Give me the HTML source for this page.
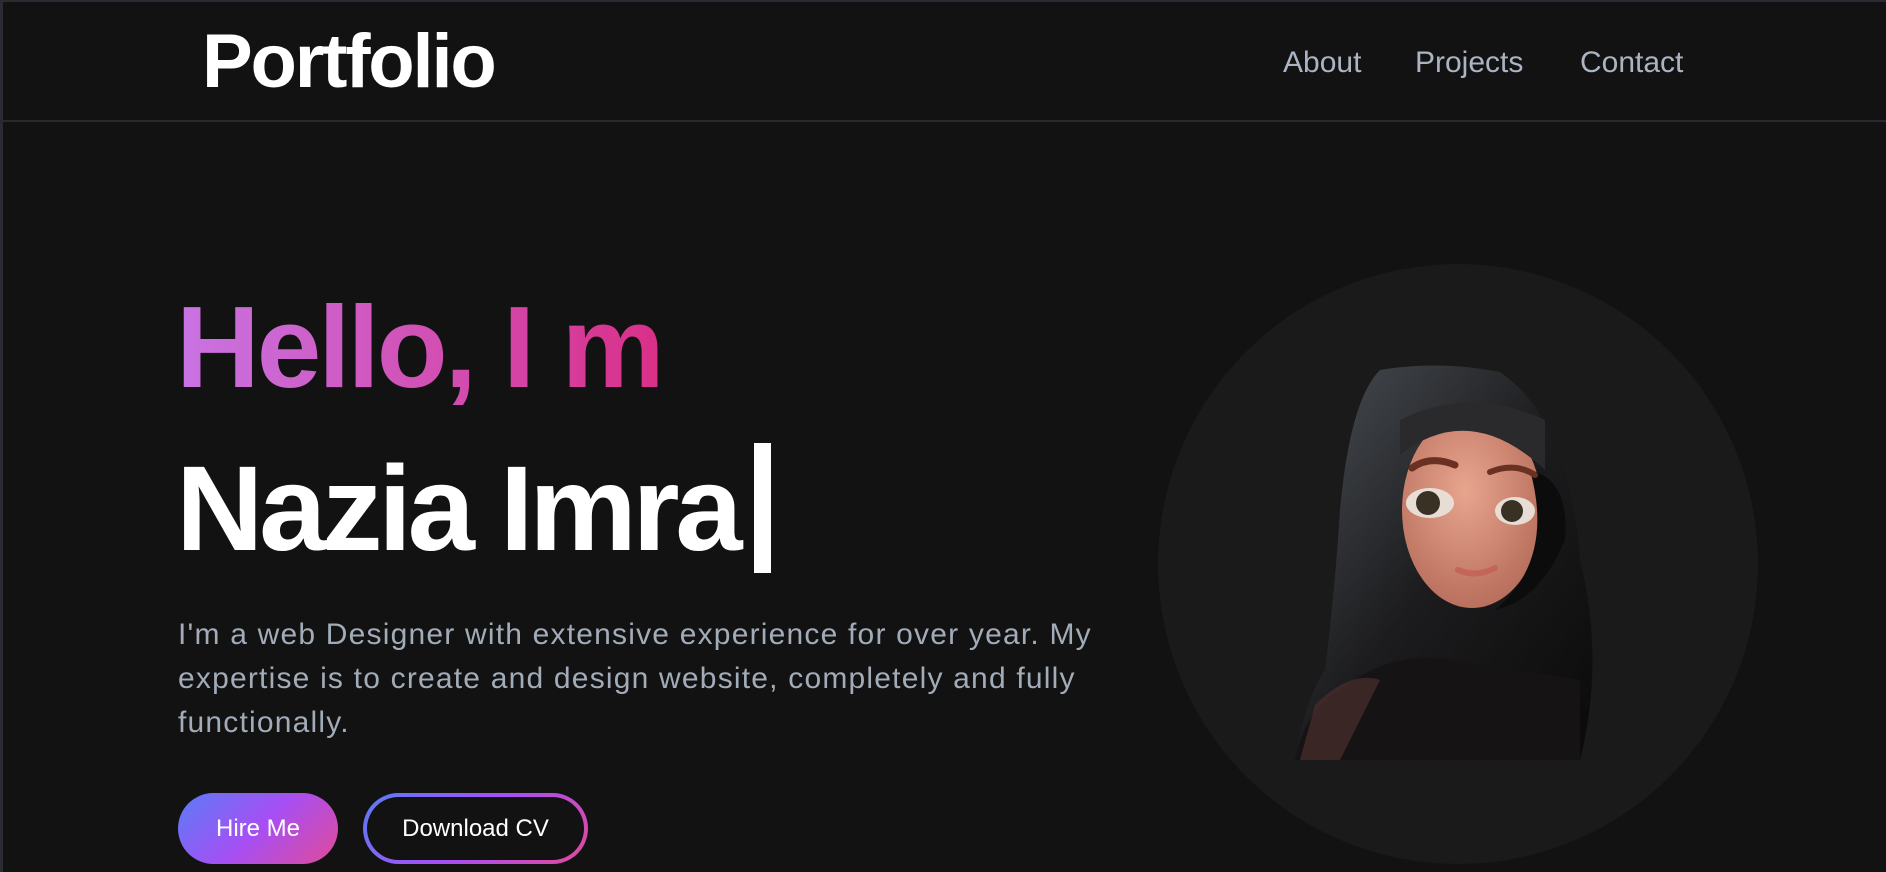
<!DOCTYPE html>
<html><head><meta charset="utf-8"><style>
*{margin:0;padding:0;box-sizing:border-box}
html,body{width:1886px;height:872px;overflow:hidden;background:#121212;font-family:"Liberation Sans",sans-serif}
.top{position:absolute;left:0;top:0;width:1886px;height:2px;background:#2b2b33}
.lft{position:absolute;left:0;top:0;width:3px;height:872px;background:#2b2b33}
.hdr{position:absolute;left:0;top:120px;width:1886px;height:2px;background:#2a2a2e}
.logo{position:absolute;left:202px;top:18px;font-size:76px;font-weight:bold;color:#fff;letter-spacing:-2.2px}
.nav{position:absolute;top:46px;font-size:30px;color:#aab4c2}
.h1{position:absolute;left:176px;top:282px;font-size:116px;font-weight:bold;letter-spacing:-3px;background:linear-gradient(90deg,#c974e4,#d92f88);-webkit-background-clip:text;color:transparent;line-height:130px}
.h2{position:absolute;left:176px;top:443px;font-size:121px;font-weight:bold;color:#fff;letter-spacing:-4.3px;line-height:130px}
.cur{position:absolute;left:754px;top:443px;width:17px;height:130px;background:#fff}
.p{position:absolute;left:178px;top:613px;width:960px;font-size:30px;line-height:44px;color:#a2acb9;letter-spacing:1.2px}
.b1{position:absolute;left:178px;top:793px;width:160px;height:71px;border-radius:36px;background:linear-gradient(135deg,#5a7cf6,#a64ff4 50%,#e14a98);color:#fff;font-size:24px;text-align:center;line-height:71px}
.b2{position:absolute;left:363px;top:793px;width:225px;height:71px;border-radius:36px;background:linear-gradient(135deg,#5a7cf6,#a64ff4 50%,#e14a98);padding:4px}
.b2 div{width:100%;height:100%;border-radius:32px;background:#121212;color:#fff;font-size:24px;text-align:center;line-height:63px}
.circ{position:absolute;left:1158px;top:264px;width:600px;height:600px;border-radius:50%;background:#1a1a1a}
</style></head><body>
<div class="top"></div><div class="lft"></div><div class="hdr"></div>
<div class="logo">Portfolio</div>
<div class="nav" style="left:1283px">About</div>
<div class="nav" style="left:1415px">Projects</div>
<div class="nav" style="left:1580px">Contact</div>
<div class="h1">Hello, I m</div>
<div class="h2">Nazia Imra</div>
<div class="cur"></div>
<div class="p">I'm a web Designer with extensive experience for over year. My expertise is to create and design website, completely and fully functionally.</div>
<div class="b1">Hire Me</div>
<div class="b2"><div>Download CV</div></div>
<div class="circ"></div>
<svg style="position:absolute;left:1280px;top:360px" width="330" height="410" viewBox="0 0 330 410">
<defs><radialGradient id="sk" cx="0.45" cy="0.4" r="0.6"><stop offset="0" stop-color="#e8a58e"/><stop offset="1" stop-color="#b9705e"/></radialGradient>
<linearGradient id="hd" x1="0" y1="0" x2="1" y2="1"><stop offset="0" stop-color="#4a4f55"/><stop offset="0.5" stop-color="#1c1c1e"/><stop offset="1" stop-color="#0a0a0a"/></linearGradient></defs>
<path d="M100 10 Q160 0 220 12 Q290 60 300 200 Q325 300 300 400 L15 400 Q25 340 45 310 Q55 230 60 150 Q70 40 100 10Z" fill="url(#hd)"/>
<path d="M60 330 Q110 290 170 300 Q240 310 300 320 L300 400 L15 400 Q25 350 60 330Z" fill="#151313"/>
<path d="M35 345 Q70 310 100 320 L60 400 L20 400Z" fill="#4a2f2c" opacity="0.7"/>
<ellipse cx="192" cy="150" rx="70" ry="98" fill="url(#sk)"/>
<path d="M120 95 Q190 40 265 110 L265 60 Q190 25 120 60Z" fill="#2a2a2c"/>
<path d="M250 110 Q275 200 215 250 Q260 240 285 180 Q290 120 250 110Z" fill="#0c0c0c"/>
<path d="M132 108 Q150 95 175 105" stroke="#6a3022" stroke-width="7" fill="none" stroke-linecap="round"/>
<path d="M210 112 Q235 102 255 115" stroke="#6a3022" stroke-width="6" fill="none" stroke-linecap="round"/>
<ellipse cx="150" cy="143" rx="24" ry="15" fill="#e8ddd4"/><circle cx="148" cy="143" r="12" fill="#3a3125"/>
<ellipse cx="235" cy="151" rx="20" ry="14" fill="#e8ddd4"/><circle cx="232" cy="151" r="11" fill="#3a3125"/>
<path d="M178 210 Q196 218 215 208" stroke="#c5655a" stroke-width="6" fill="none" stroke-linecap="round"/>
</svg>
</body></html>
